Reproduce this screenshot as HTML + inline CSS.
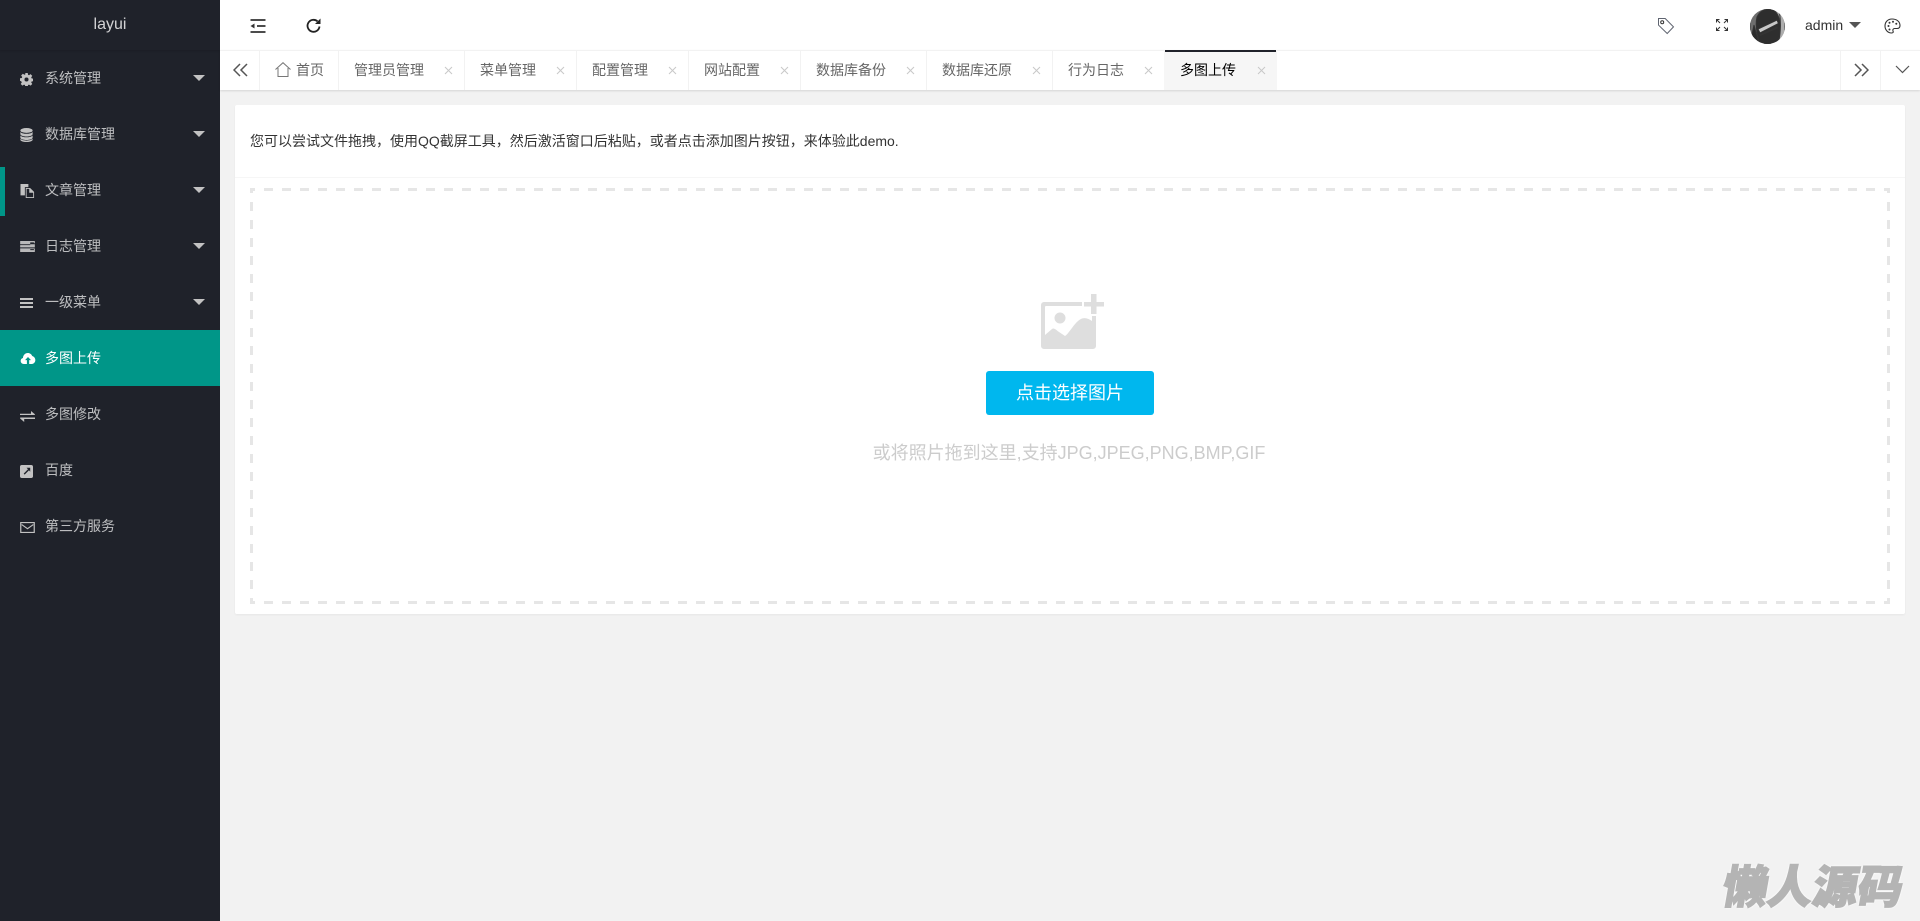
<!DOCTYPE html>
<html lang="zh-CN">
<head>
<meta charset="utf-8">
<title>多图上传</title>
<style>
*{box-sizing:border-box;margin:0;padding:0}
html,body{width:1920px;height:921px;overflow:hidden;background:#f2f2f2;font-family:"Liberation Sans","Noto Sans CJK SC",sans-serif;font-size:14px;color:#333}
.abs,.side,.nav,.nav svg,.caret,.tab,.x,.top svg{position:absolute}
.side{left:0;top:0;width:220px;height:921px;background:#1f222a}
.logo{position:absolute;left:0;top:0;width:220px;height:50px;line-height:50px;text-align:center;color:rgba(255,255,255,.8);font-size:16px;box-shadow:0 1px 2px rgba(0,0,0,.15)}
.nav{left:0;width:220px;height:56px;line-height:56px;padding-left:45px;color:rgba(255,255,255,.7);white-space:nowrap}
.nav.on{background:#009688;color:#fff}
.nav svg{left:20px;fill:#c2c2c2}
.nav.on svg{fill:#fff}
.caret{left:193px;top:25px;width:0;height:0;border:6px solid transparent;border-top-color:#c2c2c2;border-bottom:0}
.top{position:absolute;left:220px;top:0;width:1700px;height:50px;background:#fff}
.top svg{fill:none;stroke:#333}
.tabs{position:absolute;left:220px;top:50px;width:1700px;height:40px;background:#fff;border-top:1px solid #f2f2f2;box-shadow:0 1px 2px rgba(0,0,0,.12)}
.tab{top:-1px;height:40px;line-height:41px;color:#666;white-space:nowrap;border-right:1px solid #f2f2f2;padding-left:15px}
.tab.act{background:#f6f6f6;color:#000;border-right:0}
.tab.act:before{content:"";position:absolute;left:1px;top:0;right:1px;height:2px;background:#20222a}
.x{top:15px;right:10px;width:11px;height:11px}
.card{position:absolute;left:235px;top:105px;width:1670px;height:509px;background:#fff;border-radius:2px;box-shadow:0 1px 2px rgba(0,0,0,.05)}
.hd{position:absolute;left:0;top:0;width:100%;height:73px;border-bottom:1px solid #f6f6f6;line-height:72px;padding-left:15px;color:#333;white-space:nowrap}
.btn{position:absolute;left:986px;top:371px;width:168px;height:44px;background:#00b7ee;color:#fff;border-radius:3px;font-size:18px;line-height:44px;text-align:center}
.hint{position:absolute;left:769px;top:440px;width:600px;text-align:center;color:#ccc;font-size:18px;line-height:26px;white-space:nowrap}
.wm{position:absolute;left:1724px;top:853px;width:190px;font-size:45px;line-height:62px;font-weight:900;font-family:"Noto Sans CJK SC",sans-serif;color:#b4b4b4;-webkit-text-stroke:1.5px #b4b4b4;text-shadow:0 0 2px #fff,0 0 3px #fff,0 0 3px #fff;transform:skewX(-10deg);white-space:nowrap}
</style>
</head>
<body>
<div class="side">
  <div class="logo">layui</div>
  <div class="nav" style="top:50px"><svg viewBox="0 0 16 16" width="13" height="13" style="top:23px"><path d="M6.500 0h3l.4 2.200 1.200.5 1.900-1.300 2.100 2.100-1.300 1.900.5 1.200 2.200.4v3l-2.200.4-.5 1.200 1.300 1.900-2.100 2.100-1.900-1.300-1.200.5-.4 2.200h-3l-.4-2.200-1.200-.5-1.900 1.300-2.100-2.100 1.300-1.900-.5-1.200L0 9.500v-3l2.200-.4.5-1.200-1.300-1.900 2.100-2.100 1.900 1.300 1.200-.5zM8 5.500a2.500 2.500 0 1 0 0 5 2.500 2.500 0 0 0 0-5z" fill-rule="evenodd"/></svg>系统管理<i class="caret"></i></div>
  <div class="nav" style="top:106px"><svg viewBox="0 0 14 16" width="13" height="14" style="top:22px"><ellipse cx="7" cy="2.800" rx="7" ry="2.800"/><path d="M0 4.400C1 6 4 6.600 7 6.600S13 6 14 4.400V7c0 1.500-3 2.700-7 2.700S0 8.500 0 7zM0 8.400C1 10 4 10.600 7 10.600S13 10 14 8.400V11c0 1.500-3 2.700-7 2.700S0 12.500 0 11zM0 12.200c1 1.500 4 2.200 7 2.200s6-.7 7-2.200v1.200c0 1.500-3 2.600-7 2.600s-7-1.100-7-2.600z"/></svg>数据库管理<i class="caret"></i></div>
  <div class="nav" style="top:162px"><svg viewBox="0 0 16 16" width="15" height="14" style="top:22px"><path d="M0 0h9v3.500H5v9.500H0z"/><path d="M6 4.500h5l4.500 4.500v7H6zM7 5.500v9.500h7.500V10H10V5.500z" fill-rule="evenodd"/></svg>文章管理<i class="caret"></i></div>
  <div class="abs" style="left:0;top:167px;width:5px;height:49px;background:#009688"></div>
  <div class="nav" style="top:218px"><svg viewBox="0 0 16 12" width="15" height="11" style="top:23px"><path d="M0 0h16v2.500H11v1H0zM0 4.500h11V3.500h5V7H0zM0 8h16v4H0z" opacity=".95"/><path d="M11 1.500h4v1.500h-4zM11 8.800h4v1.200h-4z" fill="#1f222a"/></svg>日志管理<i class="caret"></i></div>
  <div class="nav" style="top:274px"><svg viewBox="0 0 13 10" width="13" height="10" style="top:24px"><path d="M0 0h13v2H0zM0 4h13v2H0zM0 8h13v2H0z"/></svg>一级菜单<i class="caret"></i></div>
  <div class="nav on" style="top:330px"><svg viewBox="0 0 16 12" width="16" height="11" style="top:23px"><path d="M3.500 12C1.500 12 0 10.500 0 8.600 0 7 1 5.800 2.500 5.400 2.600 2.700 4.800 0 7.800 0c2.200 0 4 1.300 4.800 3.300C14.600 3.800 16 5.700 16 7.800 16 10 14.300 12 12.200 12H9.300V7.800h2L8 4.300 4.800 7.800h2V12z"/></svg>多图上传</div>
  <div class="nav" style="top:386px"><svg viewBox="0 0 15 11" width="15" height="11" style="top:25px"><path d="M0 2.700h11V0l4 3.400-.3.600H0zM15 6.500V8H4.200v3L0 7.400l.3-.9z"/></svg>多图修改</div>
  <div class="nav" style="top:442px"><svg viewBox="0 0 14 14" width="13" height="13" style="top:23px"><path d="M2 0h10a2 2 0 0 1 2 2v10a2 2 0 0 1-2 2H2a2 2 0 0 1-2-2V2a2 2 0 0 1 2-2zM7 3l1.600 1.600L4 9.300 5 10.400 9.700 5.700 11 7.300V3z" fill-rule="evenodd"/></svg>百度</div>
  <div class="nav" style="top:498px"><svg viewBox="0 0 16 12" width="15" height="11" style="top:24px"><path d="M0 0h16v12H0zM1.300 1.200v9.600h13.400V1.200zM2 2.300l6 4.300 6-4.300.7 1L8 8.100 1.300 3.300z" fill-rule="evenodd"/></svg>第三方服务</div>
</div>

<div class="top">
  <svg style="left:29px;top:18px" width="18" height="16" viewBox="0 0 18 16" stroke-width="1.700"><path d="M1.500 2h15M8 8h8.500M1.500 14h15" stroke="#333"/><path d="M1.500 8l4-2.500v5z" fill="#333" stroke="none"/></svg>
  <svg style="left:85px;top:18px" width="18" height="16" viewBox="0 0 18 16" stroke-width="1.800"><path d="M14.500 8.500a6 6 0 1 1-2-5.200" stroke="#222"/><path d="M15.500 .5v5.500H10z" fill="#222" stroke="none"/></svg>
  <svg style="left:1437px;top:17px" width="18" height="18" viewBox="0 0 18 18" stroke="#555" stroke-width="1"><path d="M1.500 1.500h6.700l8.300 8.400-6.300 6.600-8.700-8.400z" stroke="#5f6470"/><circle cx="5.200" cy="5.300" r="1.500"/></svg>
  <svg style="left:1495px;top:18px" width="14" height="14" viewBox="0 0 14 14" stroke="#7d909e" stroke-width="1"><path d="M1.500 4.500v-3h3M1.500 1.500l3.500 3.500M9.500 1.500h3v3M12.500 1.500L9 5M1.500 9.500v3h3M1.500 12.500L5 9M12.500 9.500v3h-3M12.500 12.500L9 9"/></svg>
  <svg style="left:1530px;top:9px;border-radius:50%" width="35" height="35" viewBox="0 0 35 35" stroke="none"><path d="M0 0h35v35H0z" fill="#9a9a9a"/><path d="M0 0h14l-4 35H0z" fill="#6e6e6e"/><path d="M4 16l5 19H0z" fill="#2b2b2b"/><path d="M7 8C10 2 14 0 22 0c4 2 7 7 8 14 1 8 0 15-4 21H10C7 26 5 16 7 8z" fill="#2e2e2e"/><path d="M29 0h6v35h-7c3-10 3-24 1-35z" fill="#adadad"/><path d="M8 20l19-9 1.500 3.500L10 24z" fill="#c8c8c8"/><path d="M10 25.500l17-7.500.4 1-17 7.500z" fill="#666"/></svg>
  <div class="abs" style="left:1585px;top:0;line-height:50px;color:#333;white-space:nowrap">admin</div>
  <div class="abs" style="left:1629px;top:22px;width:0;height:0;border:6px solid transparent;border-top-color:#555;border-bottom:0"></div>
  <svg style="left:1664px;top:18px" width="17" height="16" viewBox="0 0 17 16" stroke-width="1.100"><path d="M8 1C3.800 1 1 4 1 8s3 7 6.500 7c1.800 0 2-1 1.500-2-.6-1.300.2-2.500 1.800-2.500H13c2 0 3-1 3-3C16 3.500 12.500 1 8 1z"/><circle cx="4.500" cy="8" r="1" fill="#333" stroke="none"/><circle cx="5.500" cy="4.800" r="1" fill="#333" stroke="none"/><circle cx="9" cy="3.800" r="1" fill="#333" stroke="none"/><circle cx="12.300" cy="5.800" r="1" fill="#333" stroke="none"/><circle cx="5.500" cy="11.500" r="1" fill="#333" stroke="none"/></svg>
</div>

<div class="tabs">
  <div class="abs" style="left:0;top:-1px;width:40px;height:40px;border-right:1px solid #f2f2f2"><svg class="abs" style="left:13px;top:13px" width="15" height="14" viewBox="0 0 15 14" fill="none" stroke="#555" stroke-width="1.500"><path d="M7 1L1 7l6 6M14 1L8 7l6 6"/></svg></div>
  <div class="tab" style="left:40px;width:79px;padding-left:36px"><svg class="abs" style="left:15px;top:12px" width="16" height="15" viewBox="0 0 16 15" fill="none" stroke="#777" stroke-width="1"><path d="M.5 7.500L8 .7l7.500 6.800M3 6v8.500h10V6"/></svg>首页</div>
  <div class="tab" style="left:119px;width:126px">管理员管理<svg class="x" viewBox="0 0 11 11" stroke="#c8c8c8" stroke-width="1"><path d="M2 2l7 7M9 2l-7 7"/></svg></div>
  <div class="tab" style="left:245px;width:112px">菜单管理<svg class="x" viewBox="0 0 11 11" stroke="#c8c8c8" stroke-width="1"><path d="M2 2l7 7M9 2l-7 7"/></svg></div>
  <div class="tab" style="left:357px;width:112px">配置管理<svg class="x" viewBox="0 0 11 11" stroke="#c8c8c8" stroke-width="1"><path d="M2 2l7 7M9 2l-7 7"/></svg></div>
  <div class="tab" style="left:469px;width:112px">网站配置<svg class="x" viewBox="0 0 11 11" stroke="#c8c8c8" stroke-width="1"><path d="M2 2l7 7M9 2l-7 7"/></svg></div>
  <div class="tab" style="left:581px;width:126px">数据库备份<svg class="x" viewBox="0 0 11 11" stroke="#c8c8c8" stroke-width="1"><path d="M2 2l7 7M9 2l-7 7"/></svg></div>
  <div class="tab" style="left:707px;width:126px">数据库还原<svg class="x" viewBox="0 0 11 11" stroke="#c8c8c8" stroke-width="1"><path d="M2 2l7 7M9 2l-7 7"/></svg></div>
  <div class="tab" style="left:833px;width:112px">行为日志<svg class="x" viewBox="0 0 11 11" stroke="#c8c8c8" stroke-width="1"><path d="M2 2l7 7M9 2l-7 7"/></svg></div>
  <div class="tab act" style="left:944px;width:113px;padding-left:16px">多图上传<svg class="x" viewBox="0 0 11 11" stroke="#c8c8c8" stroke-width="1"><path d="M2 2l7 7M9 2l-7 7"/></svg></div>
  <div class="abs" style="left:1620px;top:-1px;width:40px;height:40px;border-left:1px solid #f2f2f2"><svg class="abs" style="left:13px;top:13px" width="15" height="14" viewBox="0 0 15 14" fill="none" stroke="#555" stroke-width="1.500"><path d="M1 1l6 6-6 6M8 1l6 6-6 6"/></svg></div>
  <div class="abs" style="left:1660px;top:-1px;width:40px;height:40px;border-left:1px solid #f2f2f2"><svg class="abs" style="left:14px;top:15px" width="15" height="9" viewBox="0 0 15 9" fill="none" stroke="#555" stroke-width="1.200"><path d="M1 1l6.500 6.500L14 1"/></svg></div>
</div>

<div class="card">
  <div class="hd">您可以尝试文件拖拽，使用QQ截屏工具，然后激活窗口后粘贴，或者点击添加图片按钮，来体验此demo.</div>
</div>
<svg class="abs" style="left:250px;top:188px" width="1640" height="416" viewBox="0 0 1640 416" fill="none" stroke="#e6e6e6" stroke-width="3" stroke-dasharray="9 9" stroke-dashoffset="4"><path d="M0 1.500H1640"/><path d="M0 414.500H1640"/><path d="M1.500 0V416"/><path d="M1638.500 0V416"/></svg>

<svg class="abs" style="left:1041px;top:294px" width="64" height="56" viewBox="0 0 64 56"><path d="M3 8H41V12H5a1 1 0 0 0-1 1V41L11 35C13 33.500 15 36 18 38L24 42C28 40 34 27 41 24.500C45 23.500 48 25 51 27V22H55V52a3 3 0 0 1-3 3H3a3 3 0 0 1-3-3V11a3 3 0 0 1 3-3z" fill="#dedede"/><circle cx="19" cy="24" r="5.500" fill="#dedede"/><path d="M50 0h5.500v8H63v4.500H55.500V20H50v-7.500H43V8h7z" fill="#dedede"/></svg>
<div class="btn">点击选择图片</div>
<div class="hint">或将照片拖到这里,支持JPG,JPEG,PNG,BMP,GIF</div>
<div class="wm">懒人源码</div>
</body>
</html>
